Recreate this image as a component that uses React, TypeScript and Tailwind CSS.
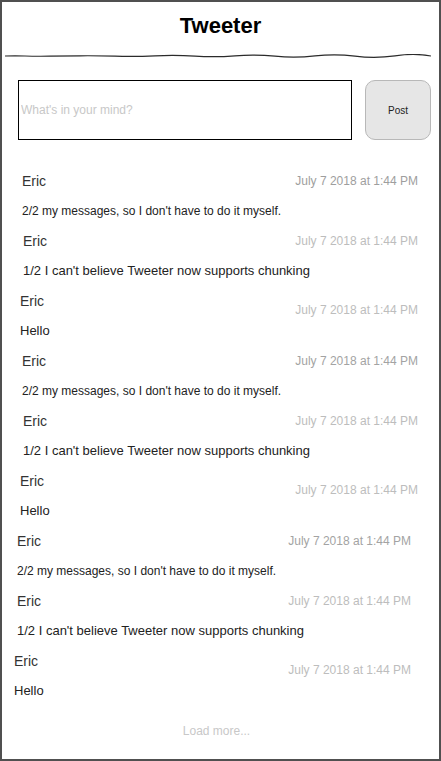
import React from 'react';

type Tweet = {
  text: string;
  big: boolean; // 13px message vs 12px
  indent: string; // left padding class
  right: string; // right padding class
  timeTop: string; // timestamp offset class
  timeColor: string;
};

const FONT = { fontFamily: '"Liberation Sans", Arial, sans-serif' };

const A = '2/2 my messages, so I don\'t have to do it myself.';
const B = '1/2 I can\'t believe Tweeter now supports chunking';

const tweets: Tweet[] = [
  { text: A, big: false, indent: 'pl-[20px]', right: 'pr-[21px]', timeTop: 'mt-0', timeColor: 'text-[#9e9e9e]' },
  { text: B, big: true, indent: 'pl-[21px]', right: 'pr-[21px]', timeTop: 'mt-0', timeColor: 'text-[#bdbdbd]' },
  { text: 'Hello', big: true, indent: 'pl-[18px]', right: 'pr-[21px]', timeTop: 'mt-[9px]', timeColor: 'text-[#bdbdbd]' },
  { text: A, big: false, indent: 'pl-[20px]', right: 'pr-[21px]', timeTop: 'mt-0', timeColor: 'text-[#a3a3a3]' },
  { text: B, big: true, indent: 'pl-[21px]', right: 'pr-[21px]', timeTop: 'mt-0', timeColor: 'text-[#bdbdbd]' },
  { text: 'Hello', big: true, indent: 'pl-[18px]', right: 'pr-[21px]', timeTop: 'mt-[9px]', timeColor: 'text-[#bdbdbd]' },
  { text: A, big: false, indent: 'pl-[15px]', right: 'pr-[28px]', timeTop: 'mt-0', timeColor: 'text-[#a3a3a3]' },
  { text: B, big: true, indent: 'pl-[15px]', right: 'pr-[28px]', timeTop: 'mt-0', timeColor: 'text-[#bdbdbd]' },
  { text: 'Hello', big: true, indent: 'pl-[12px]', right: 'pr-[28px]', timeTop: 'mt-[9px]', timeColor: 'text-[#bdbdbd]' },
];

function Rule() {
  return (
    <svg width="426" height="4" viewBox="0 0 426 4" className="block ml-[3px]">
      <path
        d="M0 2 Q 10 1.6 20 2 T 45 2.2 T 75 1.8 T 110 2.2 T 150 1.8 T 190 2.1 T 230 1.8 T 270 2.2 T 310 1.9 T 350 2.1 T 390 1.8 T 426 2"
        fill="none"
        stroke="#2b2b2b"
        strokeWidth="1.2"
      />
    </svg>
  );
}

function TweetRow({ t }: { t: Tweet }) {
  return (
    <div className={`flex flex-col h-[60px] whitespace-nowrap ${t.indent} ${t.right}`}>
      <div className="flex justify-between items-start h-[20px]">
        <span className="leading-[20px] text-[14px] text-[#333]">Eric</span>
        <span className={`leading-[20px] text-[12px] ${t.timeTop} ${t.timeColor}`}>July 7 2018 at 1:44 PM</span>
      </div>
      <div className={`mt-[10px] h-[20px] leading-[20px] text-[#222] ${t.big ? 'text-[13px]' : 'text-[12px]'}`}>
        {t.text}
      </div>
    </div>
  );
}

export default function App() {
  return (
    <div style={FONT} className="w-[441px] h-[761px] bg-white border-2 border-[#505050] box-border overflow-hidden">
      <header className="h-[52px] pb-[4px] flex items-center justify-center">
        <h1 className="text-[22px] font-bold text-black leading-none">Tweeter</h1>
      </header>
      <Rule />

      <div className="flex mt-[22px] pl-[16px] gap-[13px]">
        <input
          placeholder="What's in your mind?"
          className="w-[334px] h-[60px] border border-black pl-[2px] text-[12px] outline-none placeholder:text-[#c8c8c8]"
        />
        <button className="w-[66px] h-[60px] rounded-[10px] bg-[#e6e6e6] border border-[#b8b8b8] text-[10px] text-[#222]">
          Post
        </button>
      </div>

      <div className="mt-[31px] flex flex-col">
        {tweets.map((t, i) => (
          <TweetRow key={i} t={t} />
        ))}
      </div>

      <div className="mt-[10px] h-[20px] leading-[20px] text-center text-[12px] text-[#c8c8c8] pr-[8px]">Load more...</div>
    </div>
  );
}
